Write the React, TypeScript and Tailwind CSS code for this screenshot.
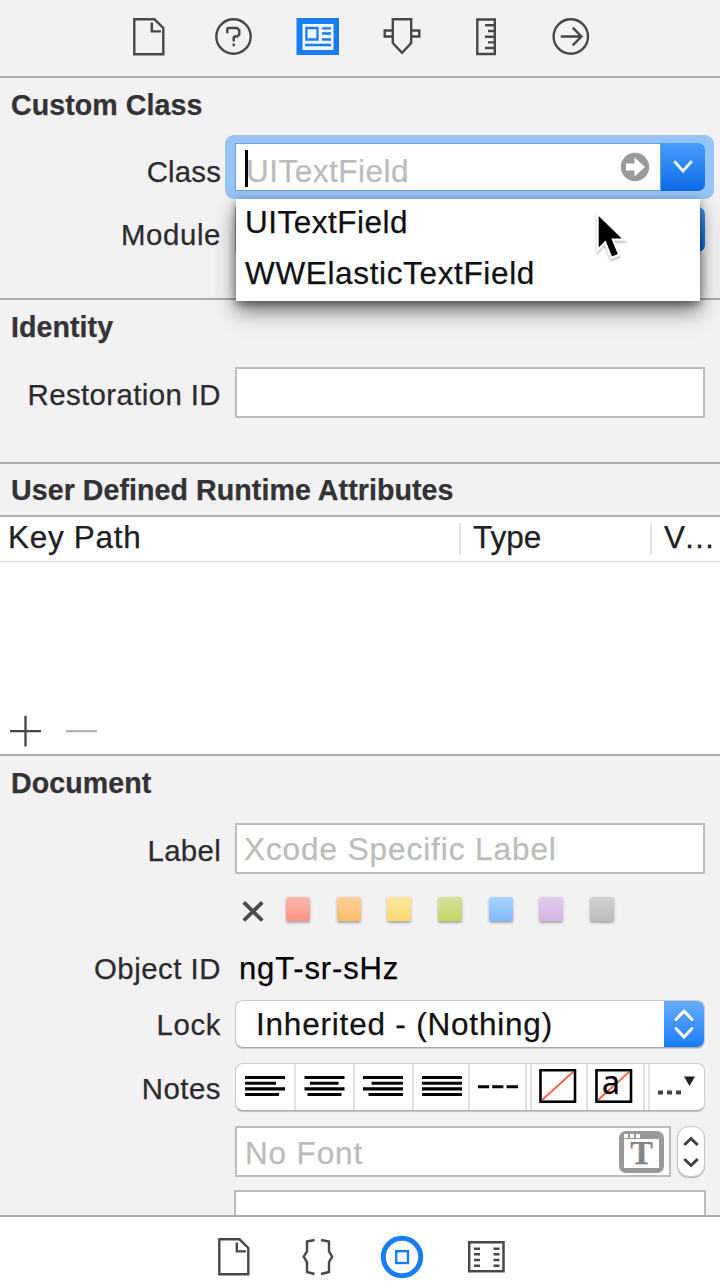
import type { ReactNode } from 'react';

const swatches = [
  'from-[#ffb9ae] to-[#fb9384]',
  'from-[#fdd09a] to-[#f8bd66]',
  'from-[#fde7a0] to-[#f9d96c]',
  'from-[#d8dfa0] to-[#c5d560]',
  'from-[#abd3ff] to-[#7fb9fb]',
  'from-[#e0cdea] to-[#d5b4e6]',
  'from-[#d2d2d2] to-[#bcbcbc]',
];

function Heading({ children }: { children: ReactNode }) {
  return (
    <h2 className="h-7 pl-[11px] text-[28.6px] leading-7 font-bold tracking-[0.06px] whitespace-nowrap text-[#333336]">{children}</h2>
  );
}

function Label({ className = '', children }: { className?: string; children: ReactNode }) {
  return (
    <div className={`h-7 w-[221px] shrink-0 text-right text-[29.4px] leading-7 whitespace-nowrap text-[#2b2b2e] ${className}`}>
      {children}
    </div>
  );
}

function FileIcon() {
  return (
    <svg width="32" height="38" viewBox="0 0 32 38" fill="none" stroke="#48484a" strokeWidth="2.4">
      <path d="M1.3 1.3H21.5L30.3 10V36.3H1.3Z" />
      <path d="M18.8 4.5V13.4H28" />
    </svg>
  );
}

function Toolbar() {
  return (
    <div className="flex h-[78px] items-start border-b-2 border-[#acacac] pt-[18px] pl-[133px]">
      <div className="w-[81px]"><FileIcon /></div>
      <div className="w-[82px]">
        <svg width="38" height="38" viewBox="0 0 38 38" fill="none" stroke="#48484a" strokeWidth="2.4">
          <circle cx="19.5" cy="18.5" r="17.2" />
          <path d="M13.3 15.2V11Q13.3 10 14.3 10H23L25.3 12.3V16.4L23.2 18.5H20.7Q19.7 18.5 19.7 19.5V23.5M19.7 25.5V28.2" />
        </svg>
      </div>
      <div className="w-[87px]">
        <svg width="43" height="37" viewBox="0 0 43 37">
          <path fill="#187dfb" d="M.5 0H43V37H.5Z" />
          <path fill="#f0f7ff" d="M6.5 6H37.5V32H6.5Z" />
          <path fill="none" stroke="#187dfb" strokeWidth="2.3" d="M10.4 10H21.5V21.5H10.4ZM26 10.4H35M26 15.5H35M26 21.5H35M9 27H35" />
        </svg>
      </div>
      <div className="w-[92px]">
        <svg width="38" height="38" viewBox="0 0 38 38" fill="none" stroke="#48484a" strokeWidth="2.4">
          <path d="M9.8 1.3H28.2V25L19 34.8L9.8 25Z" />
          <path d="M9.8 12.5H1.7V18.5H9.8M28.2 12.5H36.3V18.5H28.2" />
        </svg>
      </div>
      <div className="w-[78px]">
        <svg width="22" height="38" viewBox="0 0 22 38" fill="none" stroke="#48484a" strokeWidth="2.4">
          <path d="M2.3 1.5H19.8V36H2.3Z" />
          <path d="M10 7.3H20M13 13H20M10 18.7H20M13 24.4H20M10 30H20" />
        </svg>
      </div>
      <svg className="overflow-visible" width="38" height="38" viewBox="0 0 38 38" fill="none" stroke="#48484a" strokeWidth="2.4">
        <circle cx="17.8" cy="18.5" r="17.2" />
        <path d="M7.8 18.5H28M19.7 9.7L28.4 18.5L19.7 27.3" />
      </svg>
    </div>
  );
}

function ClassField() {
  return (
    <div className="relative ml-[4px] h-16 w-[489px] rounded-[9px] bg-[#97c4f8] pt-[8px] pl-[10px]">
      <div className="flex h-12 w-[470px]">
        <div className="flex h-12 w-[426px] items-center border border-[#6ca0da] bg-white pl-[9px]">
          <div className="mt-[2px] h-[37px] w-[3px] bg-black" />
          <span className="mt-[8px] -ml-[2px] h-10 flex-1 text-[31.5px] leading-10 tracking-[0.5px] text-[#bcbcbc]">UITextField</span>
          <svg className="mr-[10px]" width="30" height="30" viewBox="0 0 30 30">
            <circle cx="15" cy="15" r="14.2" fill="#9a9a9a" />
            <path d="M6 11.5H14.5V5.5L25 15L14.5 24.5V18.5H6Z" fill="white" />
          </svg>
        </div>
        <div className="flex h-12 w-[44px] items-center justify-center rounded-r-[7px] bg-linear-to-b from-[#469dfb] to-[#096be9]">
          <svg width="22" height="14" viewBox="0 0 22 14" fill="none" stroke="#e8f4ff" strokeWidth="3" strokeLinecap="round">
            <path d="M3 2L11 11L19 2" />
          </svg>
        </div>
      </div>
      <div className="absolute top-[64px] left-[11px] z-10 h-[102px] w-[464px] bg-white pl-[9px] text-[31.5px] text-[#101014] shadow-[0_10px_20px_rgba(0,0,0,0.5),0_3px_8px_rgba(0,0,0,0.4)]">
        <div className="h-[50px] leading-[47px] tracking-[0.5px]">UITextField</div>
        <div className="h-[50px] leading-[48px] tracking-[0.65px]">WWElasticTextField</div>
      </div>
      <svg className="absolute top-[76px] left-[367px] z-20 drop-shadow-[0_2px_1px_rgba(0,0,0,0.25)]" width="36" height="54" viewBox="0 0 36 54">
        <path d="M6.7 5V36.5L13.5 29.5L20 45.5L25.8 43L19.3 27.5H29.7Z" fill="black" stroke="white" strokeWidth="4.5" paintOrder="stroke" />
      </svg>
    </div>
  );
}

const alignments = [
  'M5 2.5H45M5 8.2H36M5 13.9H45M5 19.5H39',
  'M4.5 2.5H44.5M10 8.2H38.5M4.5 13.9H44.5M7.5 19.5H41.5',
  'M4 2.5H44M12.5 8.2H44M4 13.9H44M9.5 19.5H44',
  'M4 2.5H44M4 8.2H44M4 13.9H44M4 19.5H44',
];

function StruckBox() {
  return (
    <svg width="38" height="34" viewBox="0 0 38 34" fill="none">
      <path d="M3 31L34 3" stroke="#f4694b" strokeWidth="2" />
      <rect x="1.5" y="1.2" width="34.5" height="31.5" stroke="black" strokeWidth="2.6" />
    </svg>
  );
}

function NotesBar() {
  return (
    <div className="ml-[14px] flex h-12 w-[470px] items-center rounded-[8px] border border-[#cfcfcf] border-b-[#aaa] bg-white shadow-[0_1px_1px_rgba(0,0,0,0.2)]">
      {alignments.map((d, i) => (
        <div key={d} className={`flex h-full shrink-0 items-center border-r-2 border-[#e1e1e1] pl-[4px] ${i === 3 ? 'w-[56px]' : i === 0 ? 'w-[60px]' : 'w-[59px]'}`}>
          <svg className="shrink-0" width="48" height="24" viewBox="0 0 48 24" stroke="black" strokeWidth="3.1"><path d={d} /></svg>
        </div>
      ))}
      <div className="flex h-full w-[57px] shrink-0 items-center justify-center border-r-2 border-[#e1e1e1]">
        <svg width="40" height="4" viewBox="0 0 40 4" stroke="black" strokeWidth="3"><path d="M0 1.7H11.2M14.2 1.7H25.4M28.5 1.7H40" /></svg>
      </div>
      <div className="h-full w-[5px] shrink-0 border-r-2 border-[#e1e1e1]" />
      <div className="flex h-full w-[56px] shrink-0 items-center border-r-2 border-[#e1e1e1] pb-[3px] pl-[7px]">
        <StruckBox />
      </div>
      <div className="relative flex h-full w-[57px] shrink-0 items-center border-r-2 border-[#e1e1e1] pb-[3px] pl-[7px]">
        <StruckBox />
        <span className="absolute -top-[4px] left-[14px] text-[32px] leading-[44px] text-black [font-family:'Noto_Sans',sans-serif]">a</span>
      </div>
      <div className="h-full w-[5px] shrink-0 border-r-2 border-[#e1e1e1]" />
      <svg className="ml-[7px]" width="42" height="30" viewBox="0 0 42 30">
        <path d="M27 4.5H38L32.5 14Z" fill="#222" />
        <path d="M1 20.5H6M10 20.5H15M19 20.5H24" stroke="#444" strokeWidth="4" />
      </svg>
    </div>
  );
}

function BottomBar() {
  return (
    <div className="flex h-[73px] items-start border-t-2 border-[#adadad] bg-white pt-[21px] pl-[218px]">
      <div className="w-[83px]"><FileIcon /></div>
      <div className="w-[79px]">
        <svg width="34" height="38" viewBox="0 0 34 38" fill="none" stroke="#48484a" strokeWidth="2.4">
          <path d="M13.5 2L6 3.5V13.5L2.7 18.7L6 24V34L13.5 36M20 2L28 3.5V13.5L31.2 18.7L28 24V34L20 36" />
        </svg>
      </div>
      <div className="-mt-[3px] w-[88px]">
        <svg width="44" height="44" viewBox="0 0 44 44" fill="none" stroke="#187dfb">
          <circle cx="22" cy="22" r="18.7" strokeWidth="5" /><rect x="16.2" y="16.2" width="11.8" height="11.8" strokeWidth="2.4" />
        </svg>
      </div>
      <svg className="mt-[2px]" width="38" height="34" viewBox="0 0 38 34" fill="none" stroke="#48484a" strokeWidth="2.5">
        <path d="M1.2 2.3H35.5V31.3H1.2Z" />
        <path d="M6 8.7H12M6 14.3H12M6 20H12M6 25.7H12M25.5 8.7H31.5M25.5 14.3H31.5M25.5 20H31.5M25.5 25.7H31.5" />
      </svg>
    </div>
  );
}

export default function App() {
  return (
    <main className="flex h-[1288px] w-[720px] flex-col overflow-hidden bg-[#f3f1f3] [font-family:'Liberation_Sans',Arial,sans-serif] [-webkit-text-stroke:0.25px]">
      <Toolbar />

      <section className="h-[222px] border-b-2 border-[#acacac] pt-[13px]">
        <Heading>Custom Class</Heading>
        <div className="mt-[16px] flex h-16">
          <Label className="mt-[23px] tracking-[0.15px]">Class</Label>
          <ClassField />
        </div>
        <div className="mt-[8px] flex h-[45px]">
          <Label className="mt-[14px] tracking-[0.6px]">Module</Label>
          <div className="ml-[14px] flex h-[45px] w-[470px] justify-end border-l border-[#aaa] bg-white">
            <div className="w-[44px] rounded-r-[7px] bg-linear-to-b from-[#469dfb] to-[#096be9]" />
          </div>
        </div>
      </section>

      <section className="h-[164px] border-b-2 border-[#acacac] pt-[13px]">
        <Heading>Identity</Heading>
        <div className="mt-[26px] flex h-[51px]">
          <Label className="mt-[14px] tracking-[0.4px]">Restoration ID</Label>
          <div className="ml-[14px] h-[51px] w-[470px] border-2 border-[#bcbcbc] bg-white" />
        </div>
      </section>

      <section className="h-[292px] border-b-2 border-[#acacac] bg-white">
        <div className="h-[53px] border-b-2 border-[#acacac] bg-[#f3f1f3] pt-[12px]">
          <Heading>User Defined Runtime Attributes</Heading>
        </div>
        <div className="flex h-[45px] items-center border-b border-[#d4d4d4] text-[31.5px] leading-[37px] text-[#202022]">
          <div className="h-10 w-[459px] pl-[8px] tracking-[0.7px]">Key Path</div>
          <div className="h-8 w-[2px] bg-[#e2e0e2]" />
          <div className="h-10 w-[189px] pl-[12px]">Type</div>
          <div className="h-8 w-[2px] bg-[#e2e0e2]" />
          <div className="h-10 pl-[12px] tracking-[-1.2px]">V…</div>
        </div>
        <div className="flex pt-[153px] pl-[9px]">
          <svg width="94" height="32" viewBox="0 0 94 32" strokeWidth="2.3">
            <path d="M1 16.2H32M16.5 .7V31.5" stroke="#454547" />
            <path d="M57 16.2H88" stroke="#b1b1b1" />
          </svg>
        </div>
      </section>

      <section className="h-[459px] shrink-0 overflow-hidden pt-[13px]">
        <Heading>Document</Heading>
        <div className="mt-[26px] flex h-[51px]">
          <Label className="mt-[14px] tracking-[0.3px]">Label</Label>
          <div className="ml-[14px] h-[51px] w-[470px] border-2 border-[#bcbcbc] bg-white pl-[7px] text-[31.5px] leading-[49px] tracking-[0.93px] text-[#bcbcbc]">Xcode Specific Label</div>
        </div>
        <div className="mt-[23px] flex h-6 items-start pl-[242px]">
          <svg className="mt-[4px] mr-[22px]" width="22" height="21" viewBox="0 0 22 21" stroke="#4b4b4d" strokeWidth="3.8">
            <path d="M1.8 1.3L20.3 19.5M20.3 1.3L1.8 19.5" />
          </svg>
          <div className="flex gap-[26.7px]">
            {swatches.map((s) => <div key={s} className={`size-6 rounded-[2px] bg-linear-to-b shadow-[0_1.5px_2.5px_rgba(60,60,60,0.4)] ${s}`} />)}
          </div>
        </div>
        <div className="mt-[34px] flex h-7">
          <Label className="tracking-[0.5px]">Object ID</Label>
          <span className="ml-[18px] text-[31px] leading-[27px] tracking-[0.85px] text-black">ngT-sr-sHz</span>
        </div>
        <div className="mt-[17px] flex h-12">
          <Label className="mt-[11px] tracking-[0.6px]">Lock</Label>
          <div className="ml-[14px] flex h-12 w-[470px] overflow-hidden rounded-[8px] border border-[#c9c9c9] border-b-[#aaa] bg-white shadow-[0_1px_1px_rgba(0,0,0,0.15)]">
            <span className="flex-1 pl-[20px] text-[31.5px] leading-[47px] tracking-[0.8px] text-[#111]">Inherited - (Nothing)</span>
            <div className="-my-px -mr-px flex w-[41px] items-center justify-center bg-linear-to-b from-[#66adfc] to-[#147bfc]">
              <svg className="-ml-px" width="22" height="30" viewBox="0 0 22 30" fill="none" stroke="white" strokeWidth="3" strokeLinecap="round">
                <path d="M3 10.5L11 2L19 10.5M3 19.5L11 28L19 19.5" />
              </svg>
            </div>
          </div>
        </div>
        <div className="mt-[15px] flex h-12">
          <Label className="mt-[12px] tracking-[0.5px]">Notes</Label>
          <NotesBar />
        </div>
        <div className="mt-[15px] flex h-[51px] pl-[235px]">
          <div className="flex h-[51px] w-[436px] items-center justify-between border-2 border-[#bcbcbc] bg-white pr-[5px] pl-[8px] text-[31.5px] leading-[48px] tracking-[0.85px] text-[#bcbcbc]">
            <span className="mt-[3px]">No Font</span>
            <div className="flex h-[42px] w-[45px] flex-col rounded-[7px] bg-[#999] px-[5px] pt-[3px]">
              <div className="flex h-[5px] gap-[2px]">
                <i className="size-[4px] bg-white" /><i className="size-[4px] bg-white" /><i className="size-[4px] bg-white" />
              </div>
              <div className="flex h-[29px] justify-center bg-white text-[34px] leading-[27px] font-bold tracking-normal text-[#858585] [font-family:'Liberation_Serif',serif]">T</div>
            </div>
          </div>
          <div className="ml-[6px] flex h-[51px] w-[28px] items-center justify-center rounded-[12px] border border-[#c4c4c4] bg-white shadow-[0_1px_1px_rgba(0,0,0,0.25)]">
            <svg className="-ml-px" width="16" height="32" viewBox="0 0 16 32" fill="none" stroke="#414143" strokeWidth="3">
              <path d="M1.3 9L8 2.5L14.7 9M1.3 23L8 29.5L14.7 23" />
            </svg>
          </div>
        </div>
        <div className="mt-[13px] ml-[234px] h-[40px] w-[472px] border-2 border-[#bcbcbc] bg-white" />
      </section>

      <BottomBar />
    </main>
  );
}
